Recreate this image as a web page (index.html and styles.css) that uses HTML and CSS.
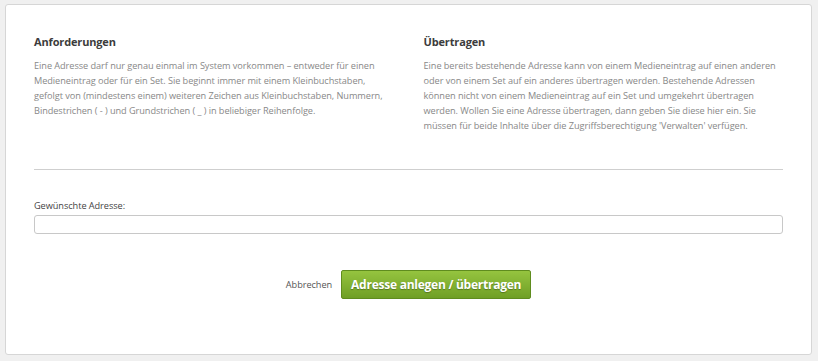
FILE: index.html
```html
<!DOCTYPE html>
<html lang="de">
<head>
    <meta charset="UTF-8">
    <title>Adresse anlegen</title>
    <link rel="stylesheet" href="styles.css">
</head>
<body>
<div class="card">
    <div class="info-row">
        <div class="info-col">
            <h3>Anforderungen</h3>
            <p>Eine Adresse darf nur genau einmal im System vorkommen – entweder für einen Medieneintrag oder für ein Set. Sie beginnt immer mit einem Kleinbuchstaben, gefolgt von (mindestens einem) weiteren Zeichen aus Kleinbuchstaben, Nummern, Bindestrichen ( - ) und Grundstrichen ( _ ) in beliebiger Reihenfolge.</p>
        </div>
        <div class="info-col">
            <h3>Übertragen</h3>
            <p>Eine bereits bestehende Adresse kann von einem Medieneintrag auf einen anderen oder von einem Set auf ein anderes übertragen werden. Bestehende Adressen können nicht von einem Medieneintrag auf ein Set und umgekehrt übertragen werden. Wollen Sie eine Adresse übertragen, dann geben Sie diese hier ein. Sie müssen für beide Inhalte über die Zugriffsberechtigung 'Verwalten' verfügen.</p>
        </div>
    </div>

    <hr class="divider">

    <div class="field">
        <label for="address">Gewünschte Adresse:</label>
        <input type="text" id="address">
    </div>

    <div class="actions">
        <a href="#" class="cancel">Abbrechen</a>
        <button class="primary">Adresse anlegen / übertragen</button>
    </div>
</div>
</body>
</html>
```

FILE: styles.css
```css
body {
    margin: 0;
    padding: 4px 6px 6px 5px;
    background-color: #f0f0f0;
    font-family: 'Open Sans', sans-serif;
    color: #333;
}
.card {
    background: #fff;
    border: 1px solid #d6d6d6;
    border-radius: 3px;
    height: 351px;
    padding: 0 28px;
    box-sizing: border-box;
}
.info-row {
    display: grid;
    grid-template-columns: 1fr 1fr;
    column-gap: 30px;
    padding-top: 30px;
    height: 134px;
}
.info-col h3 {
    margin: 0 0 9px 0;
    font-size: 11px;
    line-height: 14px;
    font-weight: bold;
    letter-spacing: -0.15px;
    color: #3c3c3c;
}
.info-col p {
    margin: 0;
    font-size: 9.2px;
    line-height: 15px;
    letter-spacing: -0.06px;
    color: #888;
}
.divider {
    border: none;
    border-top: 1px solid #cfcfcf;
    margin: 0;
}
.field {
    padding-top: 29px;
}
.field label {
    display: block;
    font-size: 9.2px;
    line-height: 14px;
    letter-spacing: -0.06px;
    color: #444;
    margin-bottom: 2px;
}
.field input {
    display: block;
    width: 100%;
    box-sizing: border-box;
    height: 19px;
    border: 1px solid #c8c8c8;
    border-radius: 3px;
    padding: 2px 6px;
    font-family: inherit;
    font-size: 10px;
}
.actions {
    display: flex;
    justify-content: center;
    align-items: center;
    gap: 9px;
    margin-top: 36px;
}
.cancel {
    font-size: 9.2px;
    letter-spacing: -0.06px;
    color: #555;
    text-decoration: none;
}
.primary {
    height: 29px;
    padding: 0 9px;
    border: 1px solid #5f8c1e;
    border-radius: 2px;
    background: linear-gradient(#95c43f, #6f9f25);
    color: #fff;
    font-family: inherit;
    font-size: 12px;
    font-weight: bold;
    letter-spacing: -0.25px;
    text-shadow: 0 1px 1px rgba(0, 0, 0, 0.3);
    cursor: pointer;
}
```
